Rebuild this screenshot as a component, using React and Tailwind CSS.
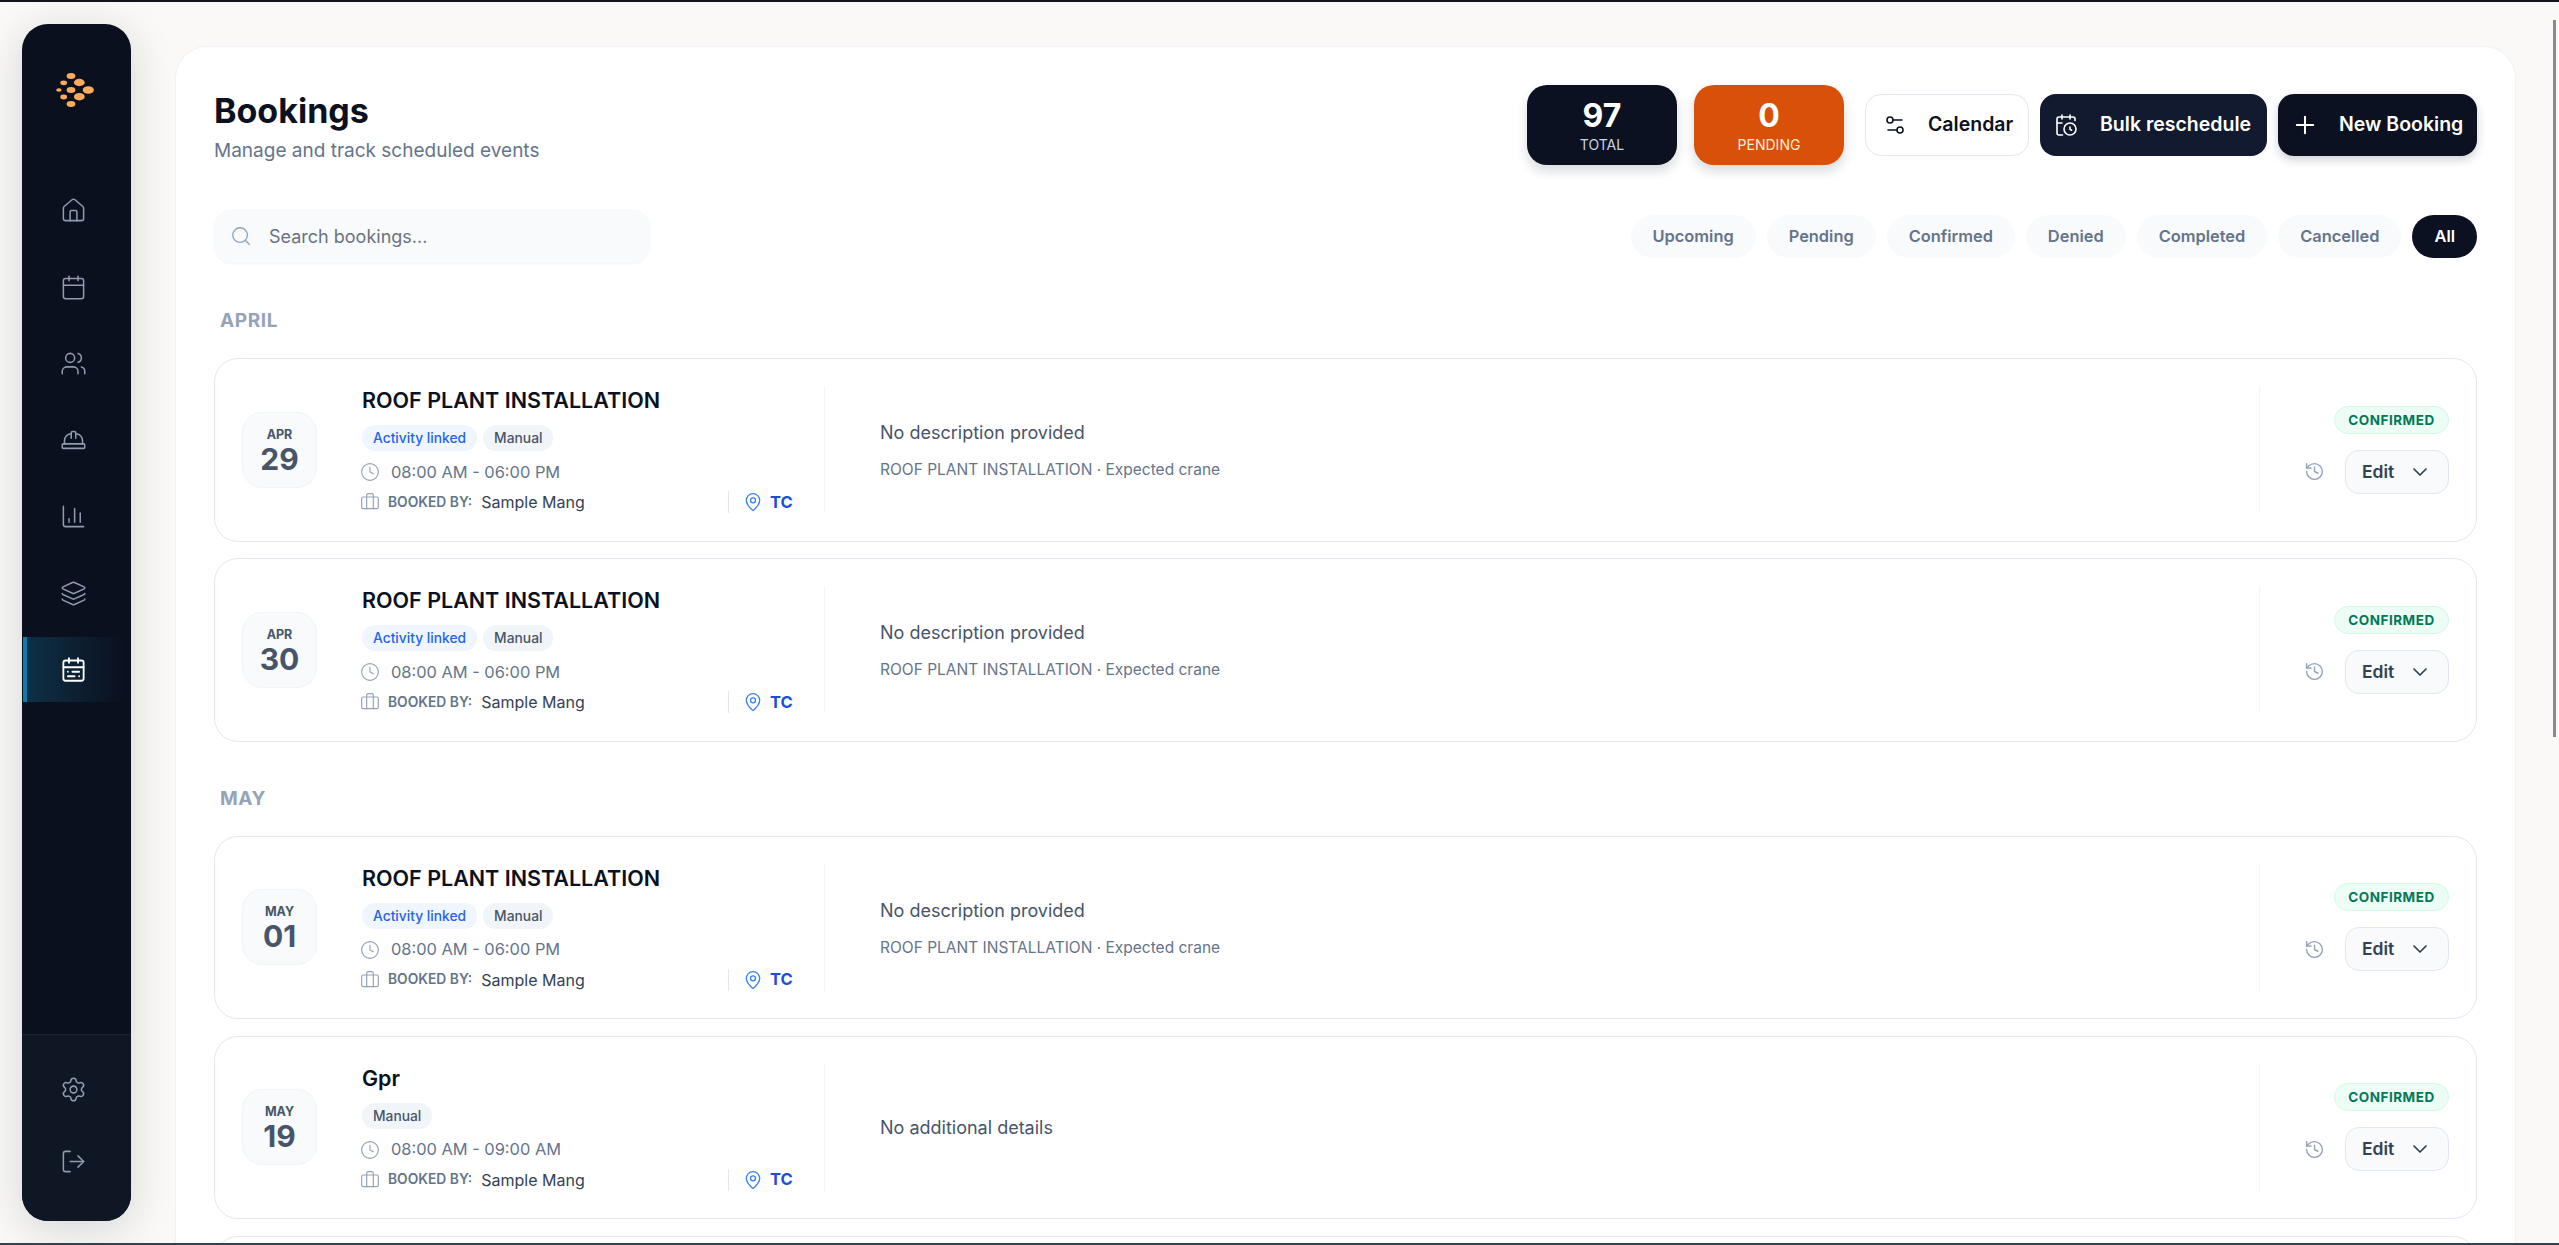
import React from 'react';
import {
  House, Calendar, Users, HardHat, ChartColumn, Layers, CalendarRange, Settings, LogOut,
  Search, Settings2, CalendarClock, Plus, Clock, Briefcase, MapPin, History, ChevronDown,
} from 'lucide-react';

const navItems = [House, Calendar, Users, HardHat, ChartColumn, Layers];
const filters = ['Upcoming', 'Pending', 'Confirmed', 'Denied', 'Completed', 'Cancelled'];

const roof = {
  title: 'ROOF PLANT INSTALLATION',
  linked: true,
  time: '08:00 AM - 06:00 PM',
  desc: 'No description provided',
  sub: 'ROOF PLANT INSTALLATION · Expected crane',
};
const gpr = { title: 'Gpr', linked: false, time: '08:00 AM - 09:00 AM', desc: 'No additional details' };

const Logo = () => (
  <svg width="40" height="36" viewBox="0 0 40 36" fill="#fbab5c">
    <ellipse cx="15" cy="5" rx="4.4" ry="3" />
    <ellipse cx="23.3" cy="11.5" rx="5.4" ry="3.7" />
    <ellipse cx="7.7" cy="11.8" rx="3.4" ry="2.4" />
    <ellipse cx="32.3" cy="19" rx="5.6" ry="3.8" />
    <ellipse cx="15" cy="19" rx="4.4" ry="3" />
    <ellipse cx="2.9" cy="19" rx="2.7" ry="1.8" />
    <ellipse cx="23.3" cy="25.7" rx="5.4" ry="3.7" />
    <ellipse cx="7.7" cy="26" rx="3.4" ry="2.4" />
    <ellipse cx="15" cy="33" rx="4.4" ry="3" />
  </svg>
);

const Sidebar = () => (
  <aside className="ml-[22px] my-[22px] w-[109px] shrink-0 flex flex-col rounded-[26px] bg-[#0a101e] shadow-[0_8px_44px_rgba(15,23,42,0.16)] overflow-hidden">
    <div className="h-[132px] pt-[47px] pr-[2px] flex justify-center">
      <Logo />
    </div>
    <nav className="flex flex-col gap-[11.5px] mt-[22px]">
      {navItems.map((Icon, i) => (
        <div key={i} className="h-[65px] pr-[7px] flex items-center justify-center text-[#8f9bb0]">
          <Icon size={27} strokeWidth={1.35} />
        </div>
      ))}
      <div className="h-[65px] ml-px mr-[6px] flex items-center justify-center border-l-4 border-[#0e7aa8] bg-gradient-to-r from-[#0d3047] to-[#0a101e] text-white pr-[6px]">
        <CalendarRange size={27} strokeWidth={1.6} />
      </div>
    </nav>
    <div className="mt-auto h-[187px] border-t border-[#1a2230] bg-[#0f1724] flex flex-col items-center pr-[7px] pt-[41px] gap-[45px] text-[#8f9bb0]">
      <Settings size={27} strokeWidth={1.35} />
      <LogOut size={27} strokeWidth={1.35} />
    </div>
  </aside>
);

const Stat = ({ value, label, className, labelClass }) => (
  <div className={`w-[150px] h-[80px] rounded-[20px] flex flex-col items-center justify-center text-white shadow-[0_6px_12px_rgba(15,23,42,0.16)] ${className}`}>
    <span className="text-[32px] leading-[36px] font-bold mt-[1px]">{value}</span>
    <span className={`text-[14px] leading-[18px] mt-[2px] ${labelClass}`}>{label}</span>
  </div>
);

const Booking = ({ month, day, item }) => (
  <div className="h-[183.5px] shrink-0 flex items-center rounded-[24px] border border-[#e2e8f0] bg-white pl-[27px] pr-[27px]">
    <div className="w-[75px] h-[76px] shrink-0 rounded-[20px] border border-[#f1f5f9] bg-[#f8fafc] flex flex-col items-center justify-center text-[#475569]">
      <span className="text-[12.5px] leading-[16px] font-bold mt-[2px]">{month}</span>
      <span className="text-[30px] leading-[32px] font-bold">{day}</span>
    </div>
    <div className="ml-[45px] w-[463px] h-[127px] shrink-0 border-r border-[#f1f5f9] flex flex-col">
      <div className="h-[28px] text-[21.5px] leading-[28px] font-semibold text-[#0b1120]">{item.title}</div>
      <div className="mt-[11px] flex gap-[6px]">
        {item.linked && (
          <span className="h-[26px] px-[11px] rounded-full bg-[#eff6ff] text-[#2563eb] text-[13.8px] leading-[26px] font-medium">Activity linked</span>
        )}
        <span className="h-[26px] px-[11px] rounded-full bg-[#f1f5f9] text-[#475569] text-[13.8px] leading-[26px] font-medium">Manual</span>
      </div>
      <div className="mt-[9px] h-[24px] flex items-center text-[16.4px] text-[#64748b]">
        <Clock size={20} strokeWidth={1.4} className="text-[#94a3b8] -ml-[2px] mr-[11px]" />
        {item.time}
      </div>
      <div className="mt-[6px] h-[24px] flex items-center">
        <Briefcase size={20} strokeWidth={1.4} className="text-[#94a3b8] -ml-[2px] mr-[8px]" />
        <span className="text-[13.8px] font-semibold text-[#64748b] mr-[9px]">BOOKED BY:</span>
        <span className="text-[16px] text-[#334155]">Sample Mang</span>
        <div className="ml-auto h-[22px] w-[96px] border-l border-[#e2e8f0] flex items-center pl-[14px]">
          <MapPin size={20} strokeWidth={1.6} className="text-[#3b82f6] mr-[7px]" />
          <span className="text-[16.5px] font-bold text-[#1d4ed8]">TC</span>
        </div>
      </div>
    </div>
    <div className="flex-1 pl-[55px] flex flex-col justify-center gap-[12px] pt-[1px]">
      <div className="text-[18px] leading-[28px] text-[#475569]">{item.desc}</div>
      {item.sub && <div className="text-[15.5px] leading-[22px] text-[#64748b]">{item.sub}</div>}
    </div>
    <div className="w-[190px] h-[127px] shrink-0 border-l border-[#f1f5f9] flex flex-col items-end justify-center gap-[16px]">
      <span className="h-[28px] w-[115px] rounded-full border border-[#d1fae5] bg-[#ecfdf5] text-[#047857] text-[13.5px] leading-[26px] font-bold tracking-[0.5px] text-center">CONFIRMED</span>
      <div className="flex items-center gap-[20px]">
        <History size={21} strokeWidth={1.6} className="text-[#94a3b8]" />
        <button className="w-[104px] h-[44px] rounded-[14px] border border-[#e2e8f0] bg-[#f8fafc] flex items-center pl-[16px] text-[#334155]">
          <span className="text-[17.5px] font-semibold">Edit</span>
          <ChevronDown size={24} strokeWidth={1.75} className="ml-[14px]" />
        </button>
      </div>
    </div>
  </div>
);

const MonthLabel = ({ children, className }) => (
  <div className={`pl-[6px] h-[28px] text-[19px] leading-[28px] font-bold tracking-[0.6px] text-[#94a3b8] ${className}`}>{children}</div>
);

export default function App() {
  return (
    <div className="relative h-screen flex flex-col overflow-hidden bg-[#faf9f7]" style={{ fontFamily: 'Inter, sans-serif' }}>
      <div className="h-[2px] shrink-0 bg-[#14141f]" />
      <div className="flex-1 min-h-0 flex">
        <Sidebar />
        <main className="ml-[44px] mr-[43px] mt-[44px] flex-1 min-w-0 rounded-t-[32px] bg-white border border-b-0 border-[#f1f1f6] px-[38px] pt-[38px] overflow-hidden">
          <header className="flex justify-between items-start">
            <div className="pt-[5px]">
              <h1 className="text-[34px] leading-[42px] font-bold text-[#0b1120]">Bookings</h1>
              <p className="text-[19px] leading-[26px] mt-[6px] text-[#64748b]">Manage and track scheduled events</p>
            </div>
            <div className="flex items-center">
              <div className="flex gap-[17px] mr-[21px]">
                <Stat value="97" label="TOTAL" className="bg-[#0b1120]" labelClass="text-[#cbd5e1]" />
                <Stat value="0" label="PENDING" className="bg-[#d95009]" labelClass="text-[#ffedd5]" />
              </div>
              <div className="flex gap-[11px]">
                <button className="w-[164px] h-[62px] rounded-[16px] border border-[#e2e8f0] bg-white flex items-center pl-[17px] gap-[21px] text-[#0b1120] text-[19.5px] font-semibold">
                  <Settings2 size={24} strokeWidth={1.6} />Calendar
                </button>
                <button className="w-[227px] h-[62px] rounded-[16px] bg-[#111a2e] flex items-center pl-[14px] gap-[22px] text-white text-[19.5px] font-semibold">
                  <CalendarClock size={24} strokeWidth={1.6} />Bulk reschedule
                </button>
                <button className="w-[199px] h-[62px] rounded-[16px] bg-[#0b1120] shadow-[0_4px_10px_rgba(15,23,42,0.2)] flex items-center pl-[13px] gap-[20px] text-white text-[19.5px] font-semibold">
                  <Plus size={28} strokeWidth={1.75} />New Booking
                </button>
              </div>
            </div>
          </header>

          <div className="mt-[44px] flex items-center justify-between">
            <div className="w-[436px] h-[54px] rounded-[18px] bg-[#f8fafc] shadow-[0_1px_2px_rgba(15,23,42,0.05)] flex items-center pl-[16px] gap-[17px]">
              <Search size={22} strokeWidth={1.5} className="text-[#94a3b8]" />
              <span className="text-[18px] text-[#6b7280]">Search bookings...</span>
            </div>
            <div className="flex gap-[11px]">
              {filters.map((f) => (
                <span key={f} className="h-[43px] px-[22px] rounded-full bg-[#f8fafc] text-[16.4px] leading-[43px] font-semibold text-[#64748b]">{f}</span>
              ))}
              <span className="h-[43px] px-[22px] rounded-full bg-[#0b1120] text-[16.4px] leading-[43px] font-semibold text-white">All</span>
            </div>
          </div>

          <MonthLabel className="mt-[44px] mb-[23px]">APRIL</MonthLabel>
          <div className="flex flex-col gap-[16.5px]">
            <Booking month="APR" day="29" item={roof} />
            <Booking month="APR" day="30" item={roof} />
          </div>

          <MonthLabel className="mt-[43px] mb-[23px]">MAY</MonthLabel>
          <div className="flex flex-col gap-[16.5px]">
            <Booking month="MAY" day="01" item={roof} />
            <Booking month="MAY" day="19" item={gpr} />
            <div className="h-[183.5px] shrink-0 rounded-[24px] border border-[#e2e8f0] bg-white" />
          </div>
        </main>
      </div>
      <div className="h-[2px] shrink-0 bg-[#334155]" />
      <div className="absolute right-[3px] top-[20px] w-[3px] h-[717px] bg-[#8a8a90]" />
    </div>
  );
}
